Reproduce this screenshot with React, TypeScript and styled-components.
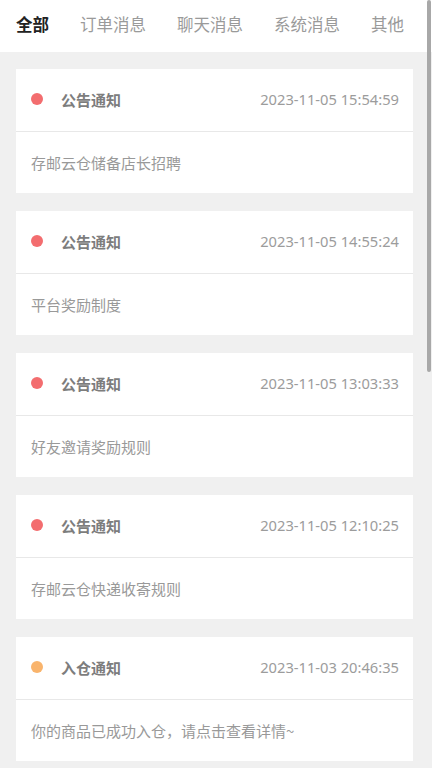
import React, { useState } from 'react';
import styled, { createGlobalStyle } from 'styled-components';

const GlobalStyle = createGlobalStyle`
 html, body {
  margin: 0;
  padding: 0;
  background: #f0f0f0;
  font-family: "Noto Sans CJK SC", "Noto Sans", sans-serif;
  overflow: hidden;
 }
 * {
  box-sizing: border-box;
 }
`;

const Page = styled.div`
 min-height: 100vh;
 background: #f0f0f0;
`;

const TabBar = styled.div`
 display: flex;
 align-items: center;
 gap: 31px;
 height: 52px;
 padding: 0 16px 4px;
 background: #fff;
`;

const Tab = styled.div<{ $active: boolean }>`
 font-size: 16.5px;
 line-height: 1;
 white-space: nowrap;
 color: ${p => (p.$active ? '#222' : '#9a9a9a')};
 font-weight: ${p => (p.$active ? 700 : 400)};
 cursor: pointer;
`;

const List = styled.div`
 display: flex;
 flex-direction: column;
 gap: 18px;
 padding: 17px 19px 7px 16px;
`;

const Card = styled.div`
 background: #fff;
`;

const CardHeader = styled.div`
 display: flex;
 align-items: center;
 height: 63px;
 padding: 0 14px 2px 15px;
 border-bottom: 1px solid #e8e8e8;
`;

const Dot = styled.span<{ $color: string }>`
 width: 12px;
 height: 12px;
 border-radius: 50%;
 background: ${p => p.$color};
 flex-shrink: 0;
`;

const Title = styled.span`
 margin-left: 18px;
 font-size: 15px;
 font-weight: 700;
 color: #7d7d7d;
 flex: 1;
`;

const Time = styled.span`
 font-size: 14.7px;
 color: #9c9c9c;
 font-family: "Noto Sans", "Noto Sans CJK SC", sans-serif;
`;

const CardBody = styled.div`
 display: flex;
 align-items: center;
 height: 61px;
 padding: 0 15px 1px;
 font-size: 15px;
 color: #999;
`;

const ScrollThumb = styled.div`
 position: fixed;
 top: 0;
 right: 1px;
 width: 4px;
 height: 372px;
 background: #a8a8a8;
 border-radius: 2px;
`;

const tabs = ['全部', '订单消息', '聊天消息', '系统消息', '其他'];

const messages = [
 { type: '公告通知', time: '2023-11-05 15:54:59', text: '存邮云仓储备店长招聘', color: '#f36d6f' },
 { type: '公告通知', time: '2023-11-05 14:55:24', text: '平台奖励制度', color: '#f36d6f' },
 { type: '公告通知', time: '2023-11-05 13:03:33', text: '好友邀请奖励规则', color: '#f36d6f' },
 { type: '公告通知', time: '2023-11-05 12:10:25', text: '存邮云仓快递收寄规则', color: '#f36d6f' },
 { type: '入仓通知', time: '2023-11-03 20:46:35', text: '你的商品已成功入仓，请点击查看详情~', color: '#f9b46c' },
];

const App: React.FC = () => {
 const [active, setActive] = useState(0);
 return (
  <Page>
   <GlobalStyle />
   <TabBar>
    {tabs.map((t, i) => (
     <Tab key={t} $active={i === active} onClick={() => setActive(i)}>
      {t}
     </Tab>
    ))}
   </TabBar>
   <List>
    {messages.map((m, i) => (
     <Card key={i}>
      <CardHeader>
       <Dot $color={m.color} />
       <Title>{m.type}</Title>
       <Time>{m.time}</Time>
      </CardHeader>
      <CardBody>{m.text}</CardBody>
     </Card>
    ))}
   </List>
   <ScrollThumb />
  </Page>
 );
};

export default App;
